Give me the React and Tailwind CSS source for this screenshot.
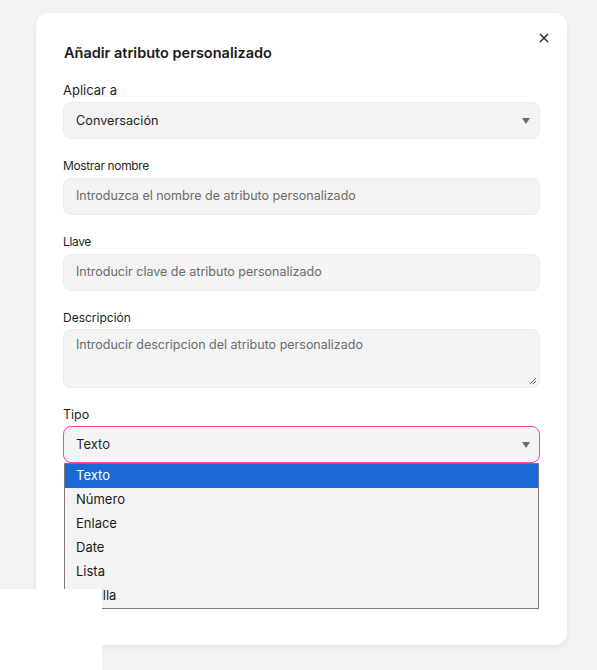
import { useState } from 'react'

const options = ['Texto', 'Número', 'Enlace', 'Date', 'Lista', 'Casilla']

function Caret() {
  return (
    <svg width="8" height="6" viewBox="0 0 8 6" className="absolute right-[9px] top-1/2 -translate-y-1/2">
      <path d="M0 0 L8 0 L4 6 Z" fill="#6b6b6b" />
    </svg>
  )
}

function Field({ label, children, labelClass = 'text-[12px]', gapClass = 'mb-[4px]' }) {
  return (
    <div className="flex flex-col">
      <label className={`leading-[16px] text-[#1f1f1f] ${gapClass} ${labelClass}`}>{label}</label>
      {children}
    </div>
  )
}

export default function App() {
  const [tipo] = useState('Texto')

  return (
    <div className="relative min-h-[670px] w-[597px] bg-[#f4f4f4] overflow-hidden" style={{ fontFamily: 'Inter, "Noto Sans", sans-serif' }}>
      <div className="absolute left-[36px] top-[13px] w-[531px] h-[632px] bg-white rounded-[12px] shadow-[0_2px_6px_rgba(0,0,0,0.08)] px-[27px] pt-[31px]">
        <button className="absolute right-[18px] top-[20px] text-[#222]">
          <svg width="10" height="10" viewBox="0 0 10 10">
            <path d="M1 1 L9 9 M9 1 L1 9" stroke="#222" strokeWidth="1.4" />
          </svg>
        </button>
        <h2 className="text-[14.5px] leading-[18px] font-semibold text-[#1a1a1a] pl-[1px]">Añadir atributo personalizado</h2>

        <div className="mt-[20px] flex flex-col gap-[19px]">
          <Field label="Aplicar a" labelClass="text-[13px]">
            <div className="relative h-[37px] rounded-[8px] bg-[#f4f4f4] border border-[#ebebeb] flex items-center px-[12px] text-[12.7px] text-[#1f1f1f]">
              Conversación
              <Caret />
            </div>
          </Field>
          <Field label="Mostrar nombre" labelClass="text-[12px] tracking-[-0.03em]">
            <div className="h-[37px] rounded-[8px] bg-[#f4f4f4] border border-[#ebebeb] flex items-center px-[12px] text-[12.5px] text-[#6b6b6b]">
              Introduzca el nombre de atributo personalizado
            </div>
          </Field>
          <Field label="Llave" labelClass="text-[12px] tracking-[-0.03em]">
            <div className="h-[37px] rounded-[8px] bg-[#f4f4f4] border border-[#ebebeb] flex items-center px-[12px] text-[12.5px] text-[#6b6b6b]">
              Introducir clave de atributo personalizado
            </div>
          </Field>
          <Field label="Descripción" gapClass="mb-[3px]">
            <div className="relative h-[59px] rounded-[8px] bg-[#f4f4f4] border border-[#ebebeb] px-[12px] pt-[7px] text-[12.5px] leading-[16px] text-[#6b6b6b]">
              Introducir descripcion del atributo personalizado
              <svg width="8" height="8" viewBox="0 0 8 8" className="absolute right-[2px] bottom-[2px]">
                <path d="M7 1 L1 7 M7 4 L4 7" stroke="#555" strokeWidth="0.9" />
              </svg>
            </div>
          </Field>
          <Field label="Tipo" labelClass="text-[12.5px]" gapClass="mb-[3px]">
            <div className="relative">
              <div className="relative h-[37px] rounded-[8px] bg-[#f4f4f4] border border-[#ff3fa4] flex items-center px-[12px] text-[13px] text-[#1f1f1f]">
                {tipo}
                <Caret />
              </div>
              <ul className="absolute left-[1px] right-[1px] top-[37px] bg-[#f4f4f4] border border-[#7a7a7a] text-[13px] text-[#1a1a1a] z-10">
                {options.map((o) => (
                  <li
                    key={o}
                    className={`h-[24px] flex items-center px-[11px] ${o === tipo ? 'bg-[#1a69d4] text-white' : ''}`}
                  >
                    {o}
                  </li>
                ))}
              </ul>
            </div>
          </Field>
        </div>
      </div>
      <div className="absolute left-0 top-[589px] w-[102px] h-[81px] bg-white z-20" />
    </div>
  )
}
